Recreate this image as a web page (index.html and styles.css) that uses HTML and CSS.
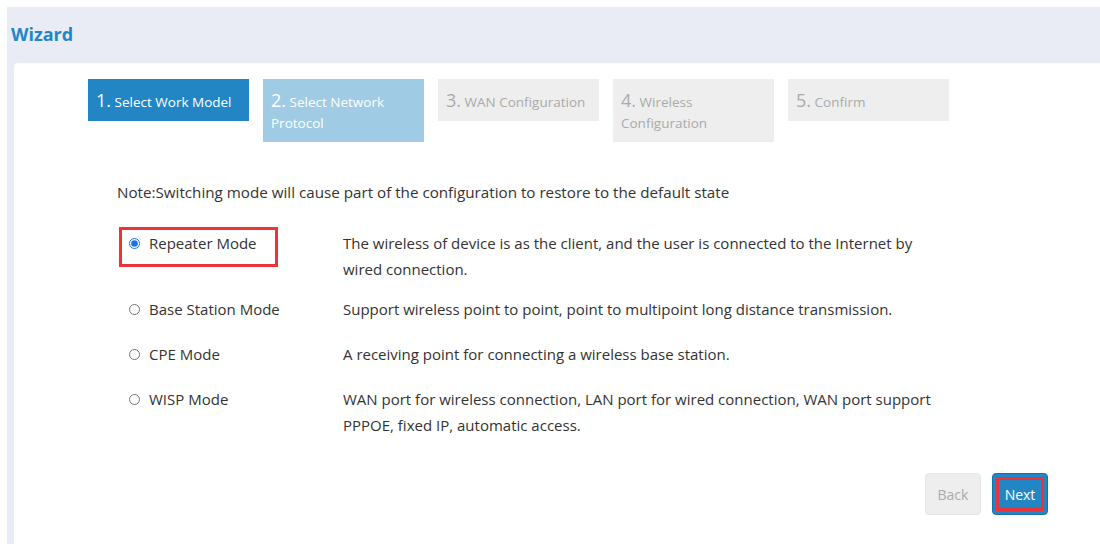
FILE: index.html
```html
<!DOCTYPE html>
<html lang="en">
<head>
<meta charset="utf-8">
<title>Wizard</title>
<link rel="stylesheet" href="styles.css">
</head>
<body>
<div class="page">
  <header class="page-head">
    <h1 class="page-title">Wizard</h1>
  </header>
  <main class="card">
    <ol class="steps">
      <li class="step step-active"><span class="step-num">1.</span> Select Work Model</li>
      <li class="step step-next"><span class="step-num">2.</span> Select Network Protocol</li>
      <li class="step"><span class="step-num">3.</span> WAN Configuration</li>
      <li class="step"><span class="step-num">4.</span> Wireless Configuration</li>
      <li class="step"><span class="step-num">5.</span> Confirm</li>
    </ol>

    <p class="note">Note:Switching mode will cause part of the configuration to restore to the default state</p>

    <div class="modes">
      <div class="mode">
        <label class="mode-label mode-marked"><input type="radio" name="mode" class="radio" checked> Repeater Mode</label>
        <p class="mode-desc">The wireless of device is as the client, and the user is connected to the Internet by wired connection.</p>
      </div>
      <div class="mode">
        <label class="mode-label"><input type="radio" name="mode" class="radio"> Base Station Mode</label>
        <p class="mode-desc">Support wireless point to point, point to multipoint long distance transmission.</p>
      </div>
      <div class="mode">
        <label class="mode-label"><input type="radio" name="mode" class="radio"> CPE Mode</label>
        <p class="mode-desc">A receiving point for connecting a wireless base station.</p>
      </div>
      <div class="mode">
        <label class="mode-label"><input type="radio" name="mode" class="radio"> WISP Mode</label>
        <p class="mode-desc">WAN port for wireless connection, LAN port for wired connection, WAN port support PPPOE, fixed IP, automatic access.</p>
      </div>
    </div>

    <div class="actions">
      <button class="btn btn-back" type="button">Back</button>
      <button class="btn btn-next" type="button"><span class="btn-mark">Next</span></button>
    </div>
  </main>
</div>
</body>
</html>
```

FILE: styles.css
```css
* {
  box-sizing: border-box;
}

html, body {
  margin: 0;
  padding: 0;
  background: #ffffff;
  height: 100%;
  overflow: hidden;
}

body {
  font-family: "Open Sans", "Noto Sans", Arial, sans-serif;
  color: #333333;
  padding: 7px 0 0 7px;
}

.page {
  background: #e9ecf4;
  height: 100%;
  display: flex;
  flex-direction: column;
}

.page-head {
  height: 56px;
  display: flex;
  align-items: center;
  padding-left: 4px;
}

.page-title {
  margin: 0;
  font-size: 18px;
  font-weight: 700;
  color: #1e86cb;
  line-height: 1;
  padding-bottom: 3px;
}

.card {
  flex: 1;
  margin-left: 7px;
  background: #ffffff;
  border-top-left-radius: 4px;
  padding: 16px 0 0 74px;
}

/* step indicator */
.steps {
  list-style: none;
  margin: 0;
  padding: 0;
  display: flex;
  align-items: flex-start;
  gap: 14px;
}

.step {
  width: 161px;
  padding: 11px 8px 8px;
  background: #eeeeee;
  color: #aaaaaa;
  font-size: 13.5px;
  line-height: 21px;
}

.step-num {
  font-size: 18px;
}

.step-active {
  background: #2386c4;
  color: #ffffff;
}

.step-next {
  background: #9fcbe4;
  color: #ffffff;
}

.note {
  margin: 40px 0 0 29px;
  font-size: 15.2px;
  line-height: 20px;
  color: #333333;
}

/* work modes */
.modes {
  margin: 28px 0 0 41px;
}

.mode {
  display: flex;
  min-height: 45px;
  padding-bottom: 14px;
}

.mode-label {
  width: 214px;
  flex: none;
  display: flex;
  align-items: center;
  align-self: flex-start;
  gap: 9px;
  font-size: 15px;
  line-height: 26px;
  color: #333333;
}

.mode-marked {
  position: relative;
}

.mode-marked::after {
  content: "";
  position: absolute;
  left: -10px;
  top: -3px;
  width: 153px;
  height: 34px;
  border: 3px solid #ec3339;
}

.radio {
  margin: 0;
  width: 11px;
  height: 11px;
  accent-color: #1a73e8;
}

.mode-desc {
  margin: 0;
  width: 606px;
  font-size: 15px;
  line-height: 26px;
  color: #333333;
}

/* footer buttons */
.actions {
  display: flex;
  justify-content: flex-end;
  gap: 11px;
  width: 960px;
  margin-top: 21px;
}

.btn {
  width: 56px;
  height: 42px;
  border-radius: 4px;
  font-family: inherit;
  font-size: 14px;
  padding: 0;
  display: flex;
  align-items: center;
  justify-content: center;
}

.btn-back {
  background: #eeeeee;
  border: 1px solid #e6e6e6;
  color: #aaaaaa;
}

.btn-next {
  background: #2386c4;
  border: 1px solid #1b6ea5;
  color: #ffffff;
  padding: 3px;
}

.btn-mark {
  flex: 1;
  align-self: stretch;
  display: flex;
  align-items: center;
  justify-content: center;
  border: 3px solid #ec3339;
}
```
